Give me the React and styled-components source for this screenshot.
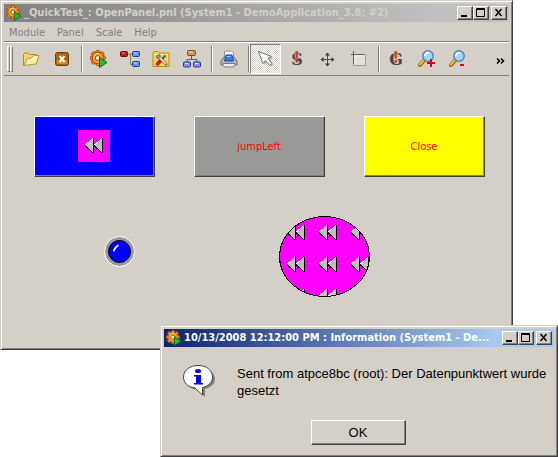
import React from 'react'
import styled, { createGlobalStyle, css } from 'styled-components'

const GlobalStyle = createGlobalStyle`
    body {
        margin: 0;
        background-color: #ffffff;
        font-family: "DejaVu Sans Condensed", "DejaVu Sans", sans-serif;
        font-size: 11px;
    }

    #root {
        height: 100vh;
    }

    * {
        box-sizing: border-box;
    }
`

const raised = css`
    border: 1px solid;
    border-color: #ffffff #404040 #404040 #ffffff;
    box-shadow: inset -1px -1px 0 #808080;
`

const Desktop = styled.div`
    position: relative;
    height: 100%;
    min-height: 457px;
    overflow: hidden;
`

const Window = styled.section`
    position: absolute;
    background-color: #d4d0c8;
    border: 1px solid;
    border-color: #d4d0c8 #404040 #404040 #d4d0c8;
    box-shadow: inset 1px 1px 0 #ffffff, inset -1px -1px 0 #808080;
    padding: 3px;
`

const MainWindow = styled(Window)`
    top: 0;
    left: 0;
    right: 45px;
`

const DialogWindow = styled(Window)`
    left: 160px;
    right: 0;
    top: 325px;
`

const TitleBar = styled.header`
    display: flex;
    align-items: center;
    height: 18px;
    padding: 0 2px;
    color: ${props => props.$active ? '#ffffff' : '#d4d0c8'};
    background: ${props => props.$active
        ? 'linear-gradient(to right, #0a246a, #a6caf0 85%)'
        : 'linear-gradient(to right, #808080, #c0c0c0 85%)'};
`

const TitleText = styled.h1`
    flex: 1;
    min-width: 0;
    margin: 0 0 0 2px;
    overflow: hidden;
    white-space: nowrap;
    font-size: 11px;
    line-height: 18px;
    font-weight: bold;
`

const WindowButton = styled.button`
    ${raised}
    flex: none;
    width: 16px;
    height: 14px;
    padding: 0;
    margin-left: ${props => props.$apart ? '2px' : '0'};
    background-color: #d4d0c8;

    svg {
        display: block;
    }
`

const MenuBar = styled.nav`
    display: flex;
    gap: 12px;
    height: 20px;
    padding: 0 5px;
    border-bottom: 1px solid #808080;
`

const MenuItem = styled.button`
    border: none;
    padding: 1px 0 0;
    background: none;
    color: #808080;
    font: inherit;
`

const ToolBar = styled.div`
    display: flex;
    align-items: stretch;
    height: 34px;
    padding: 1px 3px;
    border-top: 1px solid #ffffff;
    border-bottom: 1px solid #808080;
`

const Grip = styled.div`
    width: 3px;
    margin: 2px 0;
    border: 1px solid;
    border-color: #ffffff #808080 #808080 #ffffff;

    & + button {
        margin-left: 2px;
    }
`

const ToolButton = styled.button`
    display: flex;
    align-items: center;
    justify-content: center;
    flex: none;
    width: 31px;
    padding: 0;
    border: 1px solid transparent;
    background: none;

    ${props => props.$pressed && css`
        border-color: #808080 #ffffff #ffffff #808080;
        background: repeating-conic-gradient(#ffffff 0% 25%, #d4d0c8 0% 50%) 0 0 / 2px 2px;
    `}
`

const Separator = styled.div`
    flex: none;
    width: 2px;
    margin: 2px 0 2px 4px;
    border-left: 1px solid #808080;
    border-right: 1px solid #ffffff;
`

const MoreButton = styled.button`
    margin-left: auto;
    padding: 0 1px;
    border: none;
    background: none;
`

const Panel = styled.main`
    display: flex;
    flex-direction: column;
    gap: 39px;
    padding: 40px 24px 49px 30px;
`

const PanelRow = styled.div`
    display: flex;
    align-items: flex-start;
    gap: ${props => props.$gap};
    padding-left: ${props => props.$indent || '0'};
`

const PanelButton = styled.button`
    ${raised}
    display: flex;
    align-items: center;
    justify-content: center;
    flex: ${props => props.$grow} 1 0;
    height: 61px;
    padding: 0 1px 1px 0;
    background-color: ${props => props.$color};
    color: #ff0000;
    font: inherit;
`

const Led = styled.svg`
    display: block;
    margin-top: 20px;
`

const DialogBody = styled.div`
    display: flex;
    gap: 21px;
    padding: 18px 3px 0 19px;
`

const Message = styled.p`
    margin: 0;
    flex: 1;
    font-family: "Liberation Sans", Arial, sans-serif;
    font-size: 13px;
    line-height: 17px;
    color: #000000;
`

const DialogActions = styled.div`
    display: flex;
    justify-content: center;
    padding: 21px 2px 8px 0;
`

const OkButton = styled.button`
    ${raised}
    width: 95px;
    height: 25px;
    padding: 0;
    background-color: #d4d0c8;
    color: #000000;
    font-family: "Liberation Sans", Arial, sans-serif;
    font-size: 13px;
`

const teeth = [0, 45, 90, 135, 180, 225, 270, 315]

const GearIcon = ({ size }) => (
    <svg width={size} height={size} viewBox="0 0 18 18">
        <g stroke="#a34a08" strokeWidth="1" fill="#f59a23">
            {teeth.map(angle => (
                <rect key={angle} x="6" y="0.5" width="3.6" height="4" rx="0.8" transform={`rotate(${angle} 7.8 8)`} />
            ))}
            <circle cx="7.8" cy="8" r="5.5" />
        </g>
        <circle cx="7.8" cy="8" r="5" fill="#f7a42f" />
        <path d="M4 6.5a4.2 4.2 0 0 1 5-2.8" stroke="#ffd98a" fill="none" />
        <circle cx="7.8" cy="8" r="2.5" fill="#e5dfd3" stroke="#a34a08" />
        <path d="M9.5 7.5v10l7.5-5z" fill="#2db52d" stroke="#0b6e17" strokeLinejoin="round" />
    </svg>
)

const OpenIcon = () => (
    <svg width="18" height="18" viewBox="0 0 18 18">
        <path d="M1.5 15.5V4.5l1-1.5h3.5l1.5 1.5h7v3" fill="#f3d66b" stroke="#b08a1c" strokeLinejoin="round" />
        <path d="M2 15.5L5 9l4.5-1L11 6l6-.5-3 8.5z" fill="#fdf0a6" stroke="#b8952c" strokeLinejoin="round" />
        <path d="M5.5 10l4.5-1 1.5-2 4-.4" fill="none" stroke="#fffbe2" />
    </svg>
)

const CloseIcon = () => (
    <svg width="14" height="14" viewBox="0 0 14 14">
        <rect x="0.5" y="0.5" width="13" height="13" rx="2" fill="#a9650a" stroke="#6b3e08" />
        <path d="M2 8h10v4H2z" fill="#d48c1a" />
        <path d="M4.5 4l5 6M9.5 4l-5 6" stroke="#ffffff" strokeWidth="2" />
    </svg>
)

const TreeIcon = () => (
    <svg width="20" height="18" viewBox="0 0 20 18">
        <path d="M7 4h5M10.5 4v10.5h2" fill="none" stroke="#84824a" />
        <rect x="0.5" y="1.5" width="7" height="5" rx="1" fill="#c41818" stroke="#6d0808" />
        <path d="M2 3h3" stroke="#ff8d80" />
        <rect x="12.5" y="1.5" width="7" height="5" rx="1" fill="#5f97ef" stroke="#1b3f95" />
        <rect x="12.5" y="11.5" width="7" height="5" rx="1" fill="#5f97ef" stroke="#1b3f95" />
        <path d="M14 3h3M14 13h3" stroke="#c5dcff" />
    </svg>
)

const ToolsIcon = () => (
    <svg width="18" height="18" viewBox="0 0 18 18">
        <path d="M1 16.5V3l1-1.5h4L7.5 3H17v13.5z" fill="#f7d64c" stroke="#b88c0b" strokeLinejoin="round" />
        <path d="M2 4.5h14" stroke="#fff3a5" />
        <path d="M13.5 5.5L9 10" stroke="#525252" strokeWidth="2" />
        <path d="M9 10l-3.5 4" stroke="#d71910" strokeWidth="3.5" strokeLinecap="round" />
        <path d="M6 6l8 8" stroke="#696969" strokeWidth="3" strokeLinecap="round" />
        <path d="M6 6l8 8" stroke="#eeeeee" strokeWidth="1.5" />
        <path d="M4 7l2 1 2-2-1-2" stroke="#777777" strokeWidth="1.5" fill="none" />
    </svg>
)

const HierarchyIcon = () => (
    <svg width="18" height="18" viewBox="0 0 18 18">
        <path d="M8.5 6v3.5M4 12V9.5h10V12" fill="none" stroke="#4f6660" />
        <rect x="4.5" y="0.5" width="8" height="5" rx="1" fill="#d99443" stroke="#854708" />
        <rect x="0.5" y="12" width="7" height="5" rx="1" fill="#8b8fec" stroke="#30319b" />
        <rect x="10.5" y="12" width="7" height="5" rx="1" fill="#8b8fec" stroke="#30319b" />
        <path d="M6 2h4M2 13.5h3M12 13.5h3" stroke="#e0dcf8" />
    </svg>
)

const PrinterIcon = () => (
    <svg width="18" height="18" viewBox="0 0 18 18">
        <path d="M4.5 9V2l1-1h6l2 2v6z" fill="#f5f8ff" stroke="#8a91a3" />
        <path d="M1 11l3-4h10l3 4v4H1z" fill="#b3b5bb" stroke="#6c6f79" strokeLinejoin="round" />
        <path d="M6 5h6l1.5 6h-9z" fill="#367ce0" stroke="#1d4da5" />
        <path d="M6.5 6.5h4" stroke="#9cccff" />
        <path d="M3 13.5h12v2L13 17H5l-2-1.5z" fill="#eeeeee" stroke="#777a84" />
    </svg>
)

const ArrowIcon = () => (
    <svg width="18" height="18" viewBox="0 0 18 18">
        <path d="M3 3l13 5-3.5 2 4 4.5-2.5 2-4-4.5-2 3z" fill="#777777" opacity="0.5" />
        <path d="M1.5 1.5l13 5-3.5 2 4 5-2.5 2-4-5-2.5 3z" fill="#f7f7f5" stroke="#777777" strokeLinejoin="round" />
    </svg>
)

const LetterIcon = ({ letter }) => (
    <svg width="22" height="24" viewBox="0 0 22 24">
        <text x="11" y="18" textAnchor="middle" fontFamily="DejaVu Serif, serif" fontWeight="bold" fontSize="16" fill="#484848">{letter}</text>
        <path d="M9 4h3.5l-.5 8h-2.5z" fill="#d93a1d" stroke="#d4d0c8" strokeWidth="0.5" />
        <rect x="9.5" y="13" width="2.5" height="2.5" fill="#d93a1d" />
    </svg>
)

const MoveIcon = () => (
    <svg width="15" height="15" viewBox="0 0 15 15">
        <path d="M7.5 2v11M2 7.5h11" stroke="#4c4c4c" />
        <path d="M7.5.5L5 3.5h5zM7.5 14.5L5 11.5h5zM.5 7.5l3-2.5v5zM14.5 7.5l-3-2.5v5z" fill="#3c3c3c" />
    </svg>
)

const CropIcon = () => (
    <svg width="18" height="16" viewBox="0 0 18 16">
        <rect x="3.5" y="3.5" width="12" height="11" fill="#e2ded4" stroke="#a09c94" />
        <path d="M5 13V5h9" fill="none" stroke="#f3f1eb" />
        <path d="M1 3.5h13M3.5 0v13" stroke="#65625d" />
    </svg>
)

const ZoomIcon = ({ plus }) => (
    <svg width="18" height="18" viewBox="0 0 18 18">
        <path d="M6 10.5L2 15" stroke="#94670a" strokeWidth="4" strokeLinecap="round" />
        <path d="M6 10L2 14.5" stroke="#efc13c" strokeWidth="2" strokeLinecap="round" />
        <circle cx="10" cy="6" r="5.2" fill="#a9d4fa" stroke="#5b83ba" strokeWidth="1.5" />
        <path d="M7 6a3 3 0 0 1 4-3" stroke="#ffffff" strokeWidth="1.5" fill="none" />
        {plus
            ? <path d="M9 13h8M13 9v8" stroke="#d30909" strokeWidth="2" />
            : <path d="M11 15h4" stroke="#d30909" strokeWidth="2" />}
    </svg>
)

const RewindShapes = () => (
    <g shapeRendering="crispEdges">
        {[7, 16].map(x => (
            <g key={x} transform={`translate(${x} 8)`}>
                <path d="M0 7.5L8 0v15z" fill="#c0c0c0" />
                <path d="M0 7.5L8 0" stroke="#ffffff" />
                <path d="M0 7.5L8 15" stroke="#000000" />
                <path d="M8.5 0v15" stroke="#000000" />
            </g>
        ))}
    </g>
)

const RewindTile = () => (
    <svg width="32" height="32" viewBox="0 0 32 32">
        <rect width="32" height="32" fill="#ff00ff" />
        <RewindShapes />
    </svg>
)

const PatternEllipse = () => (
    <svg width="91" height="81" viewBox="0 0 91 81">
        <defs>
            <pattern id="rewind" x="1" y="1" width="32" height="32" patternUnits="userSpaceOnUse">
                <rect width="32" height="32" fill="#ff00ff" />
                <RewindShapes />
            </pattern>
        </defs>
        <ellipse cx="45.5" cy="40.5" rx="45" ry="40" fill="url(#rewind)" stroke="#000000" shapeRendering="crispEdges" />
    </svg>
)

const InfoIcon = () => (
    <svg width="33" height="33" viewBox="0 0 33 33">
        <path d="M17 3c8.5 0 15 4.5 15 11 0 5-4 8.500-10 10v8l-8-7.500C7 24 3 20 3 14 3 7.500 9 3 17 3z" fill="#808080" />
        <path d="M15 .5c8.500 0 14.500 4.500 14.500 11.500 0 5-3.500 9-10 10.500v7.500L12 23C5 22 .5 18 .5 12 .5 5 7 .5 15 .5z" fill="#ffffff" stroke="#444444" />
        <g fill="#0000ff">
            <ellipse cx="15" cy="6" rx="3" ry="2" />
            <path d="M11 10h7v8h2v1.500h-9V18h2v-6.500h-2z" />
        </g>
    </svg>
)

const WindowControls = () => (
    <>
        <WindowButton aria-label="Minimize">
            <svg width="14" height="12"><path d="M3 9h6" stroke="#000000" strokeWidth="2" /></svg>
        </WindowButton>
        <WindowButton aria-label="Maximize">
            <svg width="14" height="12">
                <path d="M2.5 1.5h8v8h-8zM2 2.5h9" fill="none" stroke="#000000" />
            </svg>
        </WindowButton>
        <WindowButton aria-label="Close window" $apart>
            <svg width="14" height="12"><path d="M3.5 2l6 7M9.5 2l-6 7" stroke="#000000" strokeWidth="1.5" /></svg>
        </WindowButton>
    </>
)

const menus = ['Module', 'Panel', 'Scale', 'Help']

export default function App() {
    return (
        <Desktop>
            <GlobalStyle />
            <MainWindow>
                <TitleBar>
                    <GearIcon size={16} />
                    <TitleText>_QuickTest_: OpenPanel.pnl (System1 - DemoApplication_3.8; #2)</TitleText>
                    <WindowControls />
                </TitleBar>
                <MenuBar>
                    {menus.map(menu => <MenuItem key={menu}>{menu}</MenuItem>)}
                </MenuBar>
                <ToolBar>
                    <Grip />
                    <Grip />
                    <ToolButton aria-label="Open"><OpenIcon /></ToolButton>
                    <ToolButton aria-label="Close panel"><CloseIcon /></ToolButton>
                    <Separator />
                    <ToolButton aria-label="Run"><GearIcon size={18} /></ToolButton>
                    <ToolButton aria-label="Module tree"><TreeIcon /></ToolButton>
                    <ToolButton aria-label="Settings"><ToolsIcon /></ToolButton>
                    <ToolButton aria-label="Hierarchy"><HierarchyIcon /></ToolButton>
                    <Separator />
                    <ToolButton aria-label="Print"><PrinterIcon /></ToolButton>
                    <Separator />
                    <ToolButton aria-label="Select" $pressed><ArrowIcon /></ToolButton>
                    <ToolButton aria-label="Shape script"><LetterIcon letter="S" /></ToolButton>
                    <ToolButton aria-label="Move"><MoveIcon /></ToolButton>
                    <ToolButton aria-label="Area"><CropIcon /></ToolButton>
                    <Separator />
                    <ToolButton aria-label="Global script"><LetterIcon letter="G" /></ToolButton>
                    <ToolButton aria-label="Zoom in"><ZoomIcon plus /></ToolButton>
                    <ToolButton aria-label="Zoom out"><ZoomIcon /></ToolButton>
                    <MoreButton aria-label="More tools">
                        <svg width="9" height="6" viewBox="0 0 9 6">
                            <path d="M1 .5L3.5 3 1 5.5M5 .5L7.5 3 5 5.5" fill="none" stroke="#000000" strokeWidth="1.5" />
                        </svg>
                    </MoreButton>
                </ToolBar>
                <Panel>
                    <PanelRow $gap="39px">
                        <PanelButton $grow={121} $color="#0000ff" aria-label="Rewind"><RewindTile /></PanelButton>
                        <PanelButton $grow={131} $color="#999997">jumpLeft</PanelButton>
                        <PanelButton $grow={121} $color="#ffff00">Close</PanelButton>
                    </PanelRow>
                    <PanelRow $gap="144px" $indent="70px">
                        <Led width="31" height="31" viewBox="0 0 31 31">
                            <circle cx="15.5" cy="15.5" r="15" fill="#999999" stroke="#ffffff" />
                            <circle cx="15.5" cy="15.5" r="11" fill="#0000ff" stroke="#000000" />
                            <path d="M9.5 15.5q1-4 5-6.5" stroke="#ffffff" strokeWidth="1.5" fill="none" />
                        </Led>
                        <PatternEllipse />
                    </PanelRow>
                </Panel>
            </MainWindow>
            <DialogWindow role="dialog">
                <TitleBar $active>
                    <GearIcon size={16} />
                    <TitleText as="h2">10/13/2008 12:12:00 PM : Information (System1 - De...</TitleText>
                    <WindowControls />
                </TitleBar>
                <DialogBody>
                    <InfoIcon />
                    <Message>Sent from atpce8bc (root): Der Datenpunktwert wurde gesetzt</Message>
                </DialogBody>
                <DialogActions>
                    <OkButton>OK</OkButton>
                </DialogActions>
            </DialogWindow>
        </Desktop>
    )
}
